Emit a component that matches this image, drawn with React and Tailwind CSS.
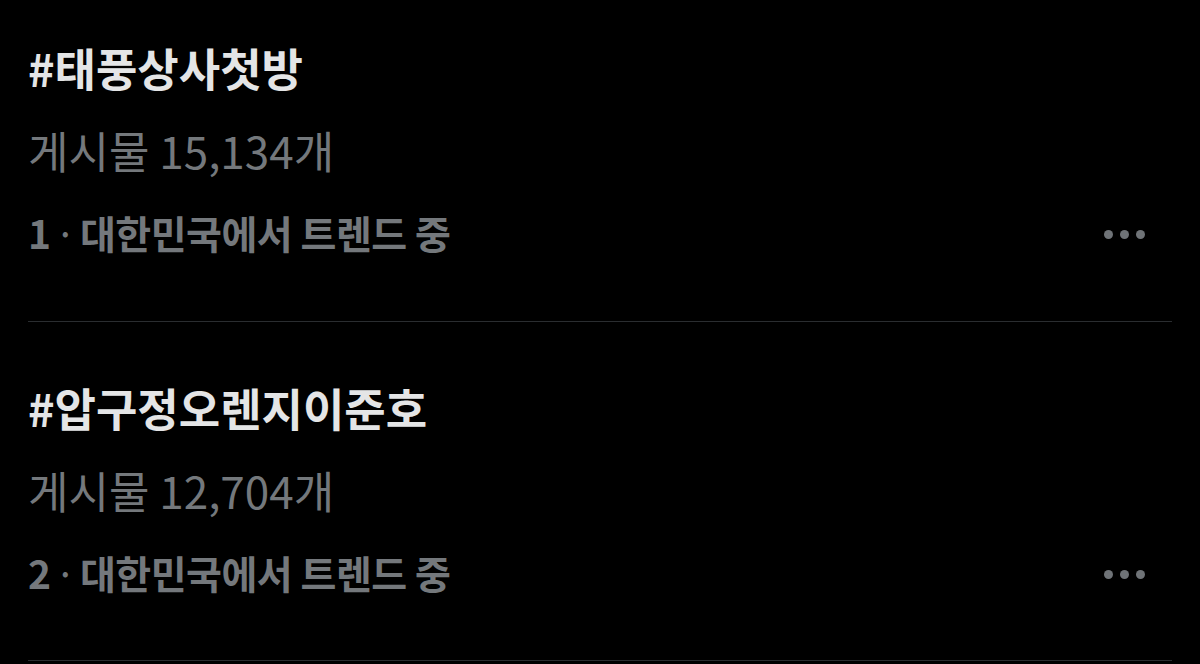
import React from "react";

const font = { fontFamily: '"Noto Sans CJK KR", "Noto Sans", sans-serif' };

function Dots() {
  return (
    <div className="flex items-center gap-[7px] pt-[4px]">
      <span className="block w-[9px] h-[9px] rounded-full bg-[#6f7377]" />
      <span className="block w-[9px] h-[9px] rounded-full bg-[#6f7377]" />
      <span className="block w-[9px] h-[9px] rounded-full bg-[#6f7377]" />
    </div>
  );
}

function Trend({ tag, count, rank }) {
  return (
    <div className="flex flex-col">
      <div className="text-[45px] leading-[82px] h-[82px] font-bold text-[#e4e5e6] whitespace-nowrap">{tag}</div>
      <div className="text-[44px] leading-[82px] h-[82px] font-normal text-[#74787c] whitespace-nowrap">게시물 {count}개</div>
      <div className="flex items-center justify-between h-[82px]">
        <div className="text-[39px] leading-[82px] font-bold text-[#74787c] whitespace-nowrap tracking-[-0.5px]">
          {rank}<span className="font-normal mx-[4px]">·</span>대한민국에서 트렌드 중
        </div>
        <div className="pr-[27px]">
          <Dots />
        </div>
      </div>
    </div>
  );
}

export default function App() {
  return (
    <div className="w-[1200px] h-[664px] bg-black overflow-hidden" style={font}>
      <div className="px-[28px] pt-[27px]">
        <Trend tag="#태풍상사첫방" count="15,134" rank="1" />
        <div className="h-[48px]" />
        <div className="h-px bg-[#2a2d30]" />
        <div className="h-[45px]" />
        <Trend tag="#압구정오렌지이준호" count="12,704" rank="2" />
        <div className="h-[47px]" />
        <div className="h-px bg-[#2a2d30]" />
      </div>
    </div>
  );
}
